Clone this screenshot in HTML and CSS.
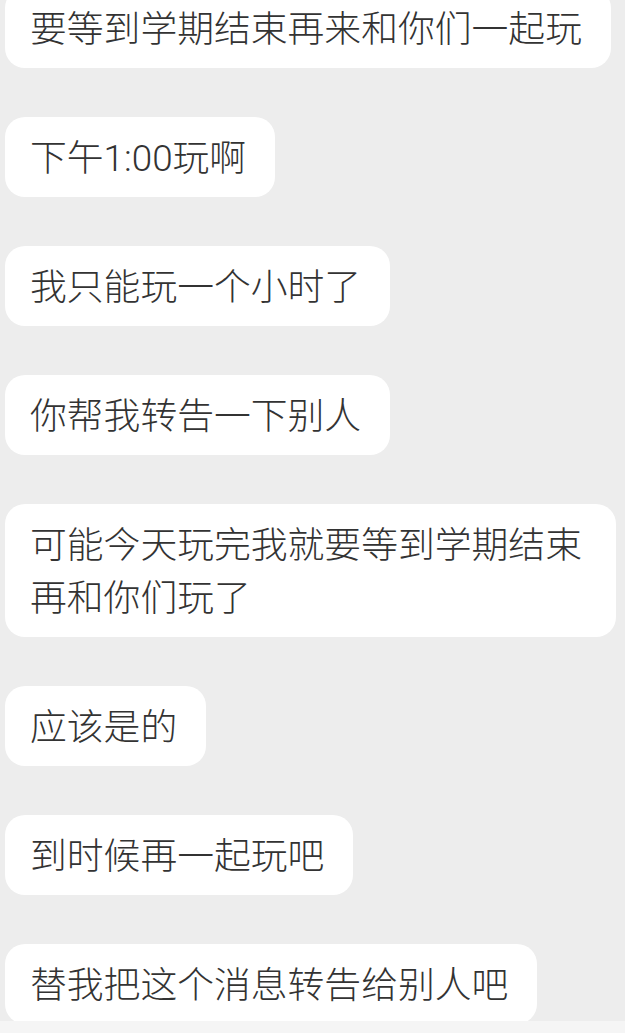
FILE: index.html
```html
<!DOCTYPE html>
<html lang="zh-CN">
<head>
    <meta charset="UTF-8">
    <meta name="viewport" content="width=device-width, initial-scale=1.0">
    <title>聊天记录</title>
    <link rel="stylesheet" href="styles.css">
</head>
<body>

    <div class="chat-list">
        <div class="bubble">要等到学期结束再来和你们一起玩</div>
        <div class="bubble">下午1:00玩啊</div>
        <div class="bubble">我只能玩一个小时了</div>
        <div class="bubble">你帮我转告一下别人</div>
        <div class="bubble">可能今天玩完我就要等到学期结束再和你们玩了</div>
        <div class="bubble">应该是的</div>
        <div class="bubble">到时候再一起玩吧</div>
        <div class="bubble">替我把这个消息转告给别人吧</div>
    </div>

    <!-- Input bar edge at the bottom -->
    <div class="input-bar"></div>
</body>
</html>
```

FILE: styles.css
```css
/* General Styles */
body {
    margin: 0;
    background: #ededed;
    font-family: Roboto, "Noto Sans CJK SC", sans-serif;
    color: #333333;
    overflow: hidden;
    height: 1033px;
}

/* Chat List */
.chat-list {
    display: flex;
    flex-direction: column;
    align-items: flex-start;
    gap: 49px;
    padding-left: 5px;
    margin-top: -12px;
}

.bubble {
    background: #ffffff;
    border-radius: 20px;
    padding: 15px 29px 12px 25px;
    max-width: 557px;
    font-size: 36.8px;
    font-weight: 300;
    line-height: 53px;
}

/* Input Bar */
.input-bar {
    position: fixed;
    left: 0;
    right: 0;
    bottom: 0;
    height: 12px;
    background: #f5f5f5;
}
```
